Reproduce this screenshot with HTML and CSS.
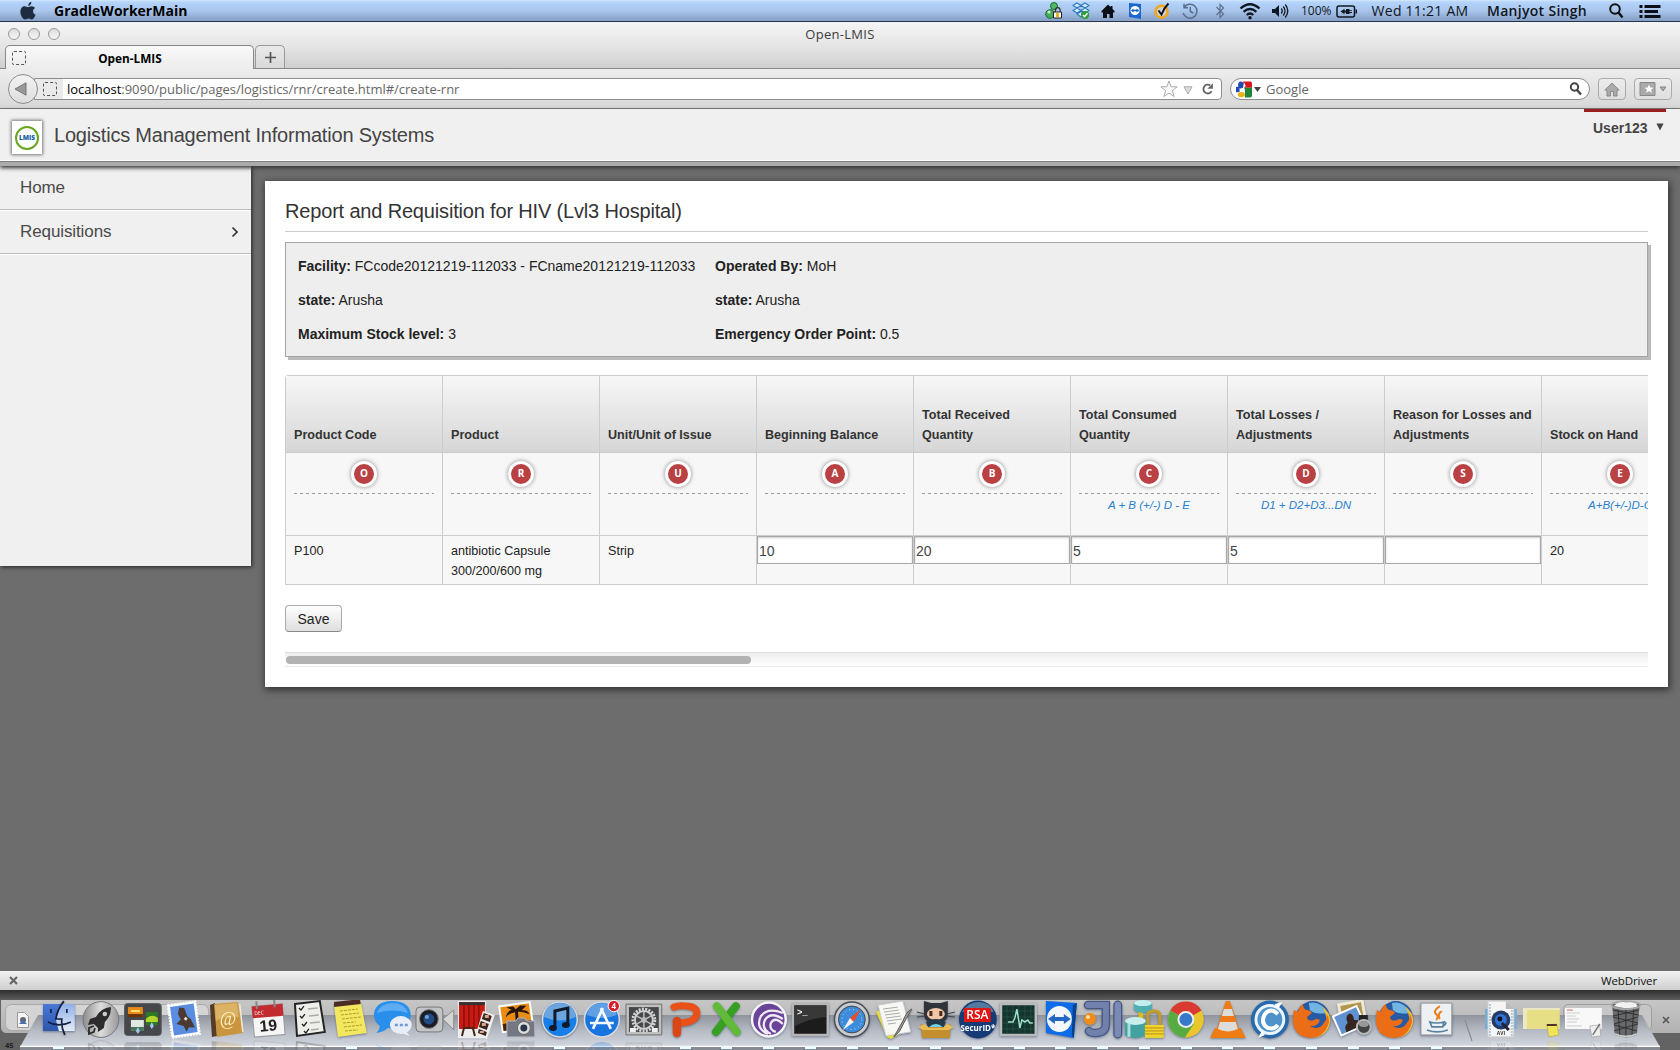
FILE: index.html
```html
<!DOCTYPE html>
<html lang="en">
<head>
<meta charset="utf-8">
<title>Open-LMIS</title>
<link rel="stylesheet" href="styles.css">
</head>
<body>
<div class="menubar">
  <svg class="apple" width="18" height="20" viewBox="0 0 18 20"><path d="M9.3 5.2C9 3 10.500 1.200 12.300.7c.3 2-1.200 4-3 4.500zM9 6.200c1-.1 2-1 3.600-1 1.500 0 2.700.7 3.400 1.800-2.800 1.700-2.500 5.500.6 6.800-.7 2-2.100 4.600-3.800 4.600-1.300 0-1.800-.8-3.300-.8s-2 .8-3.300.8C3.800 18.400 1.400 14.200 1.400 11c0-3.700 2.100-5.700 4.300-5.700 1.400 0 2.500.9 3.300.9z" fill="#1f2b41"/></svg>
  <b class="appname">GradleWorkerMain</b>
  <div class="status">
    <svg viewBox="0 0 18 18"><circle cx="9" cy="4" r="3.500" fill="#52b868" stroke="#176b2d"/><circle cx="5" cy="12" r="4.300" fill="#48ae5e" stroke="#176b2d"/><circle cx="4" cy="10" r="1.500" fill="#c9f2cf"/><path d="M10.500 10V8a2.300 2.300 0 0 1 4.600 0v2" fill="none" stroke="#333" stroke-width="1.200"/><path d="M8.500 10h8v6h-8z" fill="#fff" stroke="#222"/><path d="M11 11h3v4h-3z" fill="#e6b426"/></svg>
    <svg viewBox="0 0 18 18"><path d="m5 1 4 2.500L5 6 1 3.500zm8 0 4 2.500L13 6 9 3.500zM5 6l4 2.500L5 11 1 8.500zm8 0 4 2.500L13 11 9 8.500zM9 9.500l4 2.500-4 3-4-3z" fill="#d3eaff" stroke="#2f79bd" stroke-width="1.100"/><circle cx="13" cy="13" r="4" fill="#2e9c3b"/><path d="m11 13 1.500 1.700 3-3.500" fill="none" stroke="#fff" stroke-width="1.400"/></svg>
    <svg viewBox="0 0 18 18"><path d="M9 2.500 2.500 9v1.500H4V16h4v-4h2.500v4h3.500v-5.500h1.500V9l-2-2V4h-2v1.100z" fill="#0c0f16"/></svg>
    <svg viewBox="0 0 18 18"><path d="m3 1 12 1v15L3 15z" fill="#1b67cd"/><circle cx="9" cy="8.500" r="4.600" fill="#fff"/><path d="m4.800 8.500 2.700-2v1.300h3V6.500l2.700 2-2.700 2V9.200h-3v1.300z" fill="#1762c3"/></svg>
    <svg viewBox="0 0 18 18"><circle cx="8.500" cy="9.700" r="6" fill="#cbd5de" stroke="#f3a51b" stroke-width="2.600"/><path d="m5.500 8.500 3 4Q11 6 15.500 1.500" fill="none" stroke="#151515" stroke-width="2"/></svg>
    <svg viewBox="0 0 18 18"><path d="M3 5.500A7 7 0 1 1 2.200 11M3 1.800v4h4M9.300 5v4.500l3 1.500" fill="none" stroke="#5a6d8d" stroke-width="1.500"/></svg>
    <svg viewBox="0 0 18 18"><path d="m5.500 5 7 7-3.500 3.500v-13L12.500 6l-7 7" fill="none" stroke="#5e708f" stroke-width="1.200"/></svg>
    <svg class="big" viewBox="0 0 22 18"><path d="M1.500 6.500q9.500-8.500 19 0M4.600 9.800q6.400-5.600 12.800 0M7.700 13q3.300-3 6.600 0" fill="none" stroke="#111722" stroke-width="2.300"/><circle cx="11" cy="15.700" r="1.700" fill="#111722"/></svg>
    <svg viewBox="0 0 18 18"><path d="M1 7h3l4-4v12l-4-4H1z" fill="#111722"/><path d="M10.300 6.500q1.800 2.500 0 5m2-7q3.500 4.500 0 9m2-11q5 6.500 0 13" fill="none" stroke="#111722" stroke-width="1.300"/></svg>
    <span class="pct">100%</span>
    <svg class="big" viewBox="0 0 22 18"><rect x="1" y="4" width="17.500" height="11" rx="2" fill="none" stroke="#111722" stroke-width="1.500"/><path d="M19.500 7.500H21v4h-1.500zM4.500 9.500l4-2.700v1.700H10V7h3.500v1.200H16v.9h-2.500v.9H16v.9h-2.500V12H10v-1.500H8.500v1.700z" fill="#111722"/></svg>
    <span class="clock">Wed 11:21 AM</span>
    <span class="who">Manjyot Singh</span>
    <svg viewBox="0 0 18 18"><circle cx="8" cy="7" r="4.800" fill="none" stroke="#111" stroke-width="2"/><path d="m11.500 10.500 4 5" stroke="#111" stroke-width="2.400"/></svg>
    <svg class="big" viewBox="0 0 22 18"><path d="M.5 4.500h3m2 0h16M.5 9.500h3m2 0H19M.5 14.500h3m2 0h16" stroke="#0b0e14" stroke-width="3"/></svg>
  </div>
</div>

<div class="chrome">
  <div class="titlebar"><i></i><i></i><i></i><span>Open-LMIS</span></div>
  <div class="tabs">
    <div class="tab"><span class="blank"></span><b>Open-LMIS</b></div>
    <div class="newtab"><svg width="11" height="11" viewBox="0 0 11 11"><path d="M5.500 0v11M0 5.500h11" stroke="#555" stroke-width="1.700"/></svg></div>
  </div>
  <div class="toolbar">
    <div class="back"><svg width="14" height="14" viewBox="0 0 14 14"><path d="M1 7 12 .8v12.400z" fill="#999" stroke="#777"/></svg></div>
    <div class="url">
      <span class="blank"></span>
      <span class="address"><em>localhost</em>:9090/public/pages/logistics/rnr/create.html#/create-rnr</span>
      <svg width="18" height="18" viewBox="0 0 18 18"><path d="m9 1 2.100 5.700 6 .2-4.700 3.700 1.700 5.900L9 13.100l-5.100 3.400 1.700-5.900L.9 6.900l6-.2z" fill="#fafafa" stroke="#aaa"/></svg>
      <svg class="drop" width="10" height="9" viewBox="0 0 10 9"><path d="M1 .8h8L5 8z" fill="#ddd" stroke="#aaa"/></svg>
      <svg width="13" height="14" viewBox="0 0 14 14"><path d="M11.500 9.500A4.800 4.800 0 1 1 10 3" fill="none" stroke="#666" stroke-width="2"/><path d="M12.800.8v6H6.800z" fill="#666"/></svg>
    </div>
    <div class="search">
      <svg width="16" height="17" viewBox="0 0 18 18"><path d="M8 0h8a2 2 0 0 1 2 2v5H9z" fill="#d5191b"/><path d="M9 7h9v9a2 2 0 0 1-2 2H10V9z" fill="#218537"/><path d="M0 6h4v6H0z" fill="#1d4cb6"/><ellipse cx="5.500" cy="4" rx="3.200" ry="4" fill="#1d4cb6"/><path d="M6 7q5 2 2 5H4q4-2 2-5zM9 1l2 4-3 3z" fill="#fff"/><ellipse cx="6" cy="14.700" rx="4" ry="3" fill="#efb116"/></svg>
      <svg class="tiny" width="7" height="5" viewBox="0 0 7 5"><path d="M0 0h7L3.500 5z" fill="#444"/></svg>
      <span>Google</span>
      <svg width="14" height="14" viewBox="0 0 14 14"><circle cx="5.500" cy="5" r="3.700" fill="none" stroke="#444" stroke-width="2"/><path d="m8 8 4 4.500" stroke="#444" stroke-width="2.400"/></svg>
    </div>
    <div class="tbtn"><svg width="16" height="15" viewBox="0 0 16 15"><path d="M8 1 .8 8H3v6h3.500V9.500h3V14H13V8h2.200z" fill="#aaa" stroke="#888"/></svg></div>
    <div class="tbtn wide"><svg width="28" height="16" viewBox="0 0 28 16"><path d="M1 1.500h15v13H1z" fill="#aaa" stroke="#888"/><path d="m10 3.500 1.300 3 3.200.2-2.500 2 .9 3.300-2.900-1.900L7.100 12 8 8.700l-2.500-2 3.200-.2z" fill="#fff"/><path d="M21 6h6l-3 4z" fill="#aaa" stroke="#888"/></svg></div>
  </div>
</div>

<div class="apphead">
  <div class="logo"><span>LMIS</span></div>
  <div class="sysname">Logistics Management Information Systems</div>
  <div class="user">User123<svg width="8" height="8" viewBox="0 0 9 9"><path d="M.5.5h8l-4 8z" fill="#444"/></svg></div>
</div>

<div class="page">
  <nav class="side">
    <a>Home</a>
    <a>Requisitions<svg width="8" height="12" viewBox="0 0 8 12"><path d="m1.500 1.500 4.500 4.500-4.500 4.500" fill="none" stroke="#333" stroke-width="1.700"/></svg></a>
  </nav>
  <main class="card">
    <h1>Report and Requisition for HIV (Lvl3 Hospital)</h1>
    <div class="info">
      <p><b>Facility:</b> FCcode20121219-112033 - FCname20121219-112033</p><p><b>Operated By:</b> MoH</p>
      <p><b>state:</b> Arusha</p><p><b>state:</b> Arusha</p>
      <p><b>Maximum Stock level:</b> 3</p><p><b>Emergency Order Point:</b> 0.5</p>
    </div>
    <div class="scroller">
      <table>
        <tr class="heads"><th>Product Code</th><th>Product</th><th>Unit/Unit of Issue</th><th>Beginning Balance</th><th>Total Received Quantity</th><th>Total Consumed Quantity</th><th>Total Losses / Adjustments</th><th>Reason for Losses and Adjustments</th><th>Stock on Hand</th></tr>
        <tr class="codes">
          <td><div><s>O</s></div></td><td><div><s>R</s></div></td><td><div><s>U</s></div></td><td><div><s>A</s></div></td><td><div><s>B</s></div></td>
          <td><div><s>C</s></div><em>A + B (+/-) D - E</em></td><td><div><s>D</s></div><em>D1 + D2+D3...DN</em></td><td><div><s>S</s></div></td><td><div><s>E</s></div><em>A+B(+/-)D-C</em></td>
        </tr>
        <tr class="row"><td>P100</td><td>antibiotic Capsule 300/200/600 mg</td><td>Strip</td>
          <td class="edit"><input value="10"></td><td class="edit"><input value="20"></td><td class="edit"><input value="5"></td><td class="edit"><input value="5"></td><td class="edit"><input value=""></td><td>20</td></tr>
      </table>
    </div>
    <button class="save">Save</button>
    <div class="track"><div class="thumb"></div></div>
  </main>
</div>

<div class="addonbar"><svg width="9" height="9" viewBox="0 0 9 9"><path d="m1 1 7 7m0-7L1 8" stroke="#666" stroke-width="2.200"/></svg><span>WebDriver</span></div>

<div class="desk">
  <svg class="shelf" width="1680" height="60" viewBox="0 0 1680 60">
    <defs>
      <linearGradient id="sh" x1="0" y1="0" x2="0" y2="1"><stop offset="0" stop-color="#2e2e2e"/><stop offset="1" stop-color="#5d5d5d"/></linearGradient>
      <linearGradient id="gl" x1="0" y1="0" x2="0" y2="1"><stop offset="0" stop-color="#8f949d"/><stop offset=".5" stop-color="#b6bbc5"/><stop offset="1" stop-color="#d3d7df"/></linearGradient>
      <linearGradient id="wn" x1="0" y1="0" x2="0" y2="1"><stop offset="0" stop-color="#c6c6c6"/><stop offset="1" stop-color="#b2b2b2"/></linearGradient>
    </defs>
    <path d="M0 0h1680v60H0z" fill="#636363"/>
    <path d="M0 0h1680v10H0z" fill="url(#sh)"/>
    <path d="M1 10h1679v33H7q-6 0-6-6z" fill="url(#wn)"/>
    <rect x="5.500" y="14.500" width="203" height="26" rx="6" fill="#d4d4d4" stroke="#a9a9a9"/>
    <rect x="1563.500" y="14.500" width="88" height="26" rx="5" fill="#c6c6c6" stroke="#9d9d9d"/>
    <path d="M17.500 22.500h7l4 4v11h-11z" fill="#f4f4f4" stroke="#999"/><circle cx="23" cy="30" r="3" fill="#667"/><path d="m19 34 4-4 4 4z" fill="#4472ad"/>
    <path d="m1663 27 6 6m0-6-6 6" stroke="#555" stroke-width="1.600"/>
    <path d="M38 25h1604l18 32H20z" fill="url(#gl)"/>
    <path d="M20 56.500h1640" stroke="#fff" stroke-width="1.500"/><path d="M20 57.500h1640V60H20z" fill="#868b93"/>
    <path d="m1465 30 7 21" stroke="#878c95" stroke-width="1.200"/>
    <text x="5" y="56" dy="2" font-size="7.500" font-family="Open Sans, sans-serif" font-weight="700" fill="#222">45</text>
  </svg>
  <div class="dock">
    <svg class="on" viewBox="0 0 42 40"><defs><linearGradient id="f" x1="0" y1="0" x2="0" y2="1"><stop offset="0" stop-color="#4a78d8"/><stop offset="1" stop-color="#2d56ad"/></linearGradient><linearGradient id="f2" x1="0" y1="0" x2="0" y2="1"><stop offset="0" stop-color="#8fb0ea"/><stop offset="1" stop-color="#e3eaf6"/></linearGradient></defs><path d="M5 4h18v27H5z" fill="url(#f)"/><path d="M23 4h14v27H21l-3-11z" fill="url(#f2)"/><path d="M26 1q-7 9-8 18h6q-1 8 3 16M10 22q11 6 23 0M13 9v4m16-4v4" fill="none" stroke="#14213f" stroke-width="1.700"/></svg>
    <svg viewBox="0 0 42 40"><defs><linearGradient id="l"><stop offset="0" stop-color="#8b8b8b"/><stop offset=".5" stop-color="#ddd"/><stop offset="1" stop-color="#999"/></linearGradient></defs><circle cx="21" cy="19.500" r="18" fill="url(#l)" stroke="#777"/><path d="M31 7q-10 1-15 10l-6 2-2 6 6-1 4 4 0 4 6-4 1-6q7-7 6-15z" fill="#2c2c2e"/><circle cx="25" cy="14" r="2.300" fill="#ccc"/><path d="m14 26-5 2v6l5-2 1-4" fill="none" stroke="#2c2c2e" stroke-width="1.800"/></svg>
    <svg viewBox="0 0 42 40"><rect x="2.500" y="3.500" width="37" height="32" rx="3" fill="#45474b" stroke="#5c5e62"/><path d="M6 7h15v10H6z" fill="#e98a1c"/><path d="M6 14h15v3H6z" fill="#6d3206"/><path d="M9 10h9v2H9z" fill="#ffe071"/><path d="M24 12h12v13H24z" fill="#2c7a25"/><path d="M24 19q6-6 12-1v4H24z" fill="#b3d62b"/><path d="M9 20h13v11H9z" fill="#dfe8e2"/><path d="M9 27h13v4H9z" fill="#48765a"/><path d="m14 31 2-4 2 4-2 3zM28 26l2-4 2 4-2 3z" fill="#9cc7e8"/></svg>
    <svg viewBox="0 0 42 40"><g transform="rotate(-8 21 20)"><path d="M7 3h28v33H7z" fill="#fff" stroke="#fff" stroke-width="2" stroke-dasharray="2 1"/><path d="M9 5h24v29H9z" fill="#5a8de0"/><path d="m18 7 5 1 2 9 3 3 3 9-6-1-3 4-2-6-7-3 5-4-2-6z" fill="#4a3a31"/><path d="m21 19 2-2 2 2-2 2z" fill="#eadfce"/></g></svg>
    <svg viewBox="0 0 42 40"><path d="m5 5 5-2 2 33-5 1z" fill="#543c27"/><path d="m9 4 24-2 5 31-26 4z" fill="#c9963f"/><path d="m10 5 22-2 2 14q-12-2-23 4z" fill="#dcb265"/><path d="m35 4 3 28" stroke="#f4ead0" stroke-width="1.500"/><text x="23" y="25" text-anchor="middle" font-size="18" font-family="Liberation Serif" fill="#fff0c4">@</text></svg>
    <svg viewBox="0 0 42 40"><g transform="rotate(-5 21 20)"><path d="M6 5h31v31H6z" fill="#f5f5f5" stroke="#999"/><path d="M6 5h31v12H6z" fill="#c22b2f"/><text x="8" y="14" font-size="5" font-family="Open Sans" fill="#fff">DEC</text><text x="21" y="31" text-anchor="middle" font-size="16" font-weight="700" font-family="Liberation Sans" fill="#222">19</text><path d="M11 0v8m18-8v8" stroke="#888" stroke-width="2"/></g></svg>
    <svg viewBox="0 0 42 40"><path d="m6 4 25-3 5 31-28 4z" fill="#eeeeea" stroke="#232323" stroke-width="2"/><path d="m10 8 2 2 3-4m-4 10 2 2 3-4m-3 10 2 2 3-4m-3 9 2 2 3-4" fill="none" stroke="#222" stroke-width="1.300"/><path d="m19 9 10-1m-9 8 10-1m-9 8 10-1m-9 8 8-1" stroke="#aaa" stroke-width="1.500"/></svg>
    <svg class="on" viewBox="0 0 42 40"><path d="m4 5 27-3 6 31-29 4z" fill="#f3e760"/><path d="m4 2 26-3 1 5-27 3z" fill="#4c2c24"/><path d="m10 11 18-2m-17 6 18-2m-17 6 19-2m-18 6 13-1m-12 5 18-2m-17 6 13-1" stroke="#aa9c24" stroke-dasharray="3 1"/></svg>
    <svg viewBox="0 0 42 40"><path d="M20 1C7 1 2 8 2 15q0 7 6 11-1 5-4 7 8-1 12-5c15 2 23-5 23-13S33 1 20 1z" fill="#298fea"/><path d="M5 13Q8 4 20 3q13 0 16 10-15-5-31 0z" fill="#5dacf5"/><ellipse cx="29" cy="25" rx="11" ry="9" fill="#e8eef7"/><path d="m33 30 5 6-9-3z" fill="#e8eef7"/><path d="M23 25h3m2 0h3m2 0h3" stroke="#6f97d5" stroke-width="2.600"/></svg>
    <svg viewBox="0 0 42 40"><rect x="2" y="7" width="27" height="25" rx="4" fill="#c2c3c5" stroke="#777"/><path d="m29 19 11-9v20z" fill="#d5d5d6" stroke="#888"/><circle cx="15" cy="19" r="9.500" fill="#1a1d24" stroke="#888"/><circle cx="15" cy="19" r="5.500" fill="#214b85"/><circle cx="13" cy="17" r="2" fill="#72a3da"/></svg>
    <svg viewBox="0 0 42 40"><path d="M2 1h28v37H2z" fill="#eee"/><path d="M3 2h26v27H3z" fill="#c81b13"/><path d="M3 2h26v3H3z" fill="#333"/><path d="M8 5v23m5-23v23m5-23v23m5-23v23" stroke="#8f0f0a" stroke-width="1.500"/><path d="m8 28-2 8m11-8 2 8m-12-8h12" stroke="#4a2415" stroke-width="2"/><path d="m27 11 12 4-8 24-11-5z" fill="#eee"/><path d="m28 13 8 3-2 6-8-3zm-3 8 8 3-2 6-8-3zm-2 8 8 3-1 4-8-3z" fill="#3b241e"/><path d="M29 15h4v3h-4zm-3 8h4v3h-4zm-2 8h4v2h-4z" fill="#d8a58d"/></svg>
    <svg viewBox="0 0 42 40"><g transform="rotate(-8 20 18)"><path d="M3 3h33v28H3z" fill="#fff"/><path d="M5 5h29v24H5z" fill="#e88c14"/><path d="M5 22h29v7H5z" fill="#442306"/><path d="m18 27 1-15q-6 0-10 4 2-6 7-7l-5-3h7l2 3 5-3 6 1-5 4q6 0 7 5-6-4-11-4l-1 15z" fill="#27150c"/></g><path d="M10 21h9l2-3h7l2 3h8v16H10z" fill="#747884" stroke="#b4b7bf"/><circle cx="27" cy="28" r="6.500" fill="#ddd" stroke="#666"/><circle cx="27" cy="28" r="3.500" fill="#293447"/></svg>
    <svg class="on" viewBox="0 0 42 40"><circle cx="21" cy="19.500" r="17.500" fill="#187fe8" stroke="#d8dadd" stroke-width="1.500"/><path d="M5 17Q6 3 21 3t16 14q-16 7-32 0z" fill="#6ca4dd"/><path d="M16 28V11l13-3v17" fill="none" stroke="#101a2d" stroke-width="3"/><ellipse cx="14" cy="28" rx="4" ry="3" fill="#101a2d"/><ellipse cx="27" cy="25" rx="4" ry="3" fill="#101a2d"/></svg>
    <svg viewBox="0 0 42 40"><circle cx="21" cy="19.500" r="17.500" fill="#1875df" stroke="#d8dadd" stroke-width="1.500"/><path d="M6 15Q8 3 21 3t15 12q-15 6-30 0z" fill="#5f9fe2"/><path d="m12 29 10-21m-2 0 10 21M9 23h24" fill="none" stroke="#f3f8ff" stroke-width="2.700"/><circle cx="33" cy="6" r="5.700" fill="#d61f28" stroke="#fff"/><text x="33" y="9" text-anchor="middle" font-size="8" font-weight="700" font-family="Open Sans" fill="#fff">4</text></svg>
    <svg viewBox="0 0 42 40"><path d="M3 4h36v31H3z" fill="#c0c0c0" stroke="#707070"/><path d="M6 7h30v25H6z" fill="#45484a"/><circle cx="21" cy="20" r="11" fill="none" stroke="#d7d7d7" stroke-width="3" stroke-dasharray="2 1.300"/><circle cx="21" cy="20" r="9" fill="none" stroke="#ccc" stroke-width="2"/><circle cx="21" cy="20" r="3" fill="#aaa"/><path d="M21 12v16m-7-4 14-8m-14 0 14 8" stroke="#bbb" stroke-width="1.500"/><path d="M7 28h6v4H7zm22 0h6v4h-6z" fill="#eee"/></svg>
    <svg class="on" viewBox="0 0 42 40"><path d="M10 7q5-2 13-1 11 1 10 8-1 8-16 9" fill="none" stroke="#e95119" stroke-width="7" stroke-linecap="round"/><path d="M13 21v12" stroke="#d94716" stroke-width="8.500" stroke-linecap="round"/></svg>
    <svg class="on" viewBox="0 0 42 40"><path d="m30 6-20 26" stroke="#379f22" stroke-width="8" stroke-linecap="round"/><path d="m11 6 20 26" stroke="#61bb39" stroke-width="8" stroke-linecap="round"/></svg>
    <svg class="on" viewBox="0 0 42 40"><circle cx="21" cy="19.500" r="17" fill="#694498" stroke="#f4f4f6" stroke-width="2.500"/><path d="M35 13Q20 7 13 16q-6 12 7 18m15-15q-12-8-18 1-4 9 6 14m12-10q-8-8-12-1-2 7 5 9" fill="none" stroke="#f0eaf6" stroke-width="2.300"/></svg>
    <svg class="on" viewBox="0 0 42 40"><path d="M3 4h35v31H3z" fill="#1c1c1c" stroke="#b5b5b5" stroke-width="2.500"/><path d="M5 6h31v11q-15 1-31 9z" fill="#383838"/><text x="7" y="15" font-size="9" font-weight="700" font-family="Liberation Mono" fill="#fff">&gt;_</text></svg>
    <svg class="on" viewBox="0 0 42 40"><circle cx="21" cy="19.500" r="17.500" fill="#c9ccd0" stroke="#4c5055" stroke-width="1.500"/><circle cx="21" cy="19.500" r="13.500" fill="#3c8cdb" stroke="#444"/><circle cx="21" cy="19.500" r="10" fill="none" stroke="#c6e2ff" stroke-dasharray="1 3"/><path d="M30 9 23 22l-4-4z" fill="#e74d27"/><path d="m12 30 7-12 4 4z" fill="#f1f1f1"/></svg>
    <svg class="on" viewBox="0 0 42 40"><path d="m3 12 18-9 9 29-12 7-4-2z" fill="#e8dc35"/><path d="m5 5 25-4 8 31-25 4z" fill="#f7f7f4" stroke="#ccc"/><path d="m10 9 15-2m-14 5 15-2m-14 5 15-2m-14 5 15-2m-14 5 15-2m-14 5 8-1" stroke="#aaa"/><path d="M39 9q-5 2-9 12L21 37q7-5 10-14z" fill="#999" stroke="#5b5b5b"/></svg>
    <svg class="on" viewBox="0 0 42 40"><path d="m9 1 7 2h10l7-2v13q0 9-12 9T9 14z" fill="#30333a"/><path d="m2 12 8 2m-8 3 8-1m30-4-8 2m8 3-8-1" stroke="#444"/><ellipse cx="21" cy="14" rx="9" ry="6" fill="#f1c6a4"/><path d="M16 11v5m10-5v5" stroke="#472a20" stroke-width="3"/><path d="M11 22q10-6 20 0l-3 7H14z" fill="#24394a"/><path d="m6 24 7 3h16l7-3-1 14H7z" fill="#c38e2e"/><path d="m3 27 7-3 4 4h14l4-4 7 3-5 3H8z" fill="#e8bd56"/><path d="M14 27q7-6 14 0z" fill="#70d4ee"/></svg>
    <svg class="on" viewBox="0 0 42 40"><circle cx="21" cy="19.500" r="19" fill="#153b76"/><path d="M5 12Q12 1 23 2t14 10z" fill="#54799f"/><path d="M7 8h27v14H7z" fill="#df1612"/><text x="20.500" y="19.500" text-anchor="middle" font-size="12" font-weight="600" font-family="Open Sans" fill="#fff">RSA</text><text x="21" y="31" text-anchor="middle" font-size="8" font-weight="700" font-family="Open Sans" fill="#fff">SecurID*</text></svg>
    <svg class="on" viewBox="0 0 42 40"><path d="M3 4h35v31H3z" fill="#14342e" stroke="#b9babb" stroke-width="2.500"/><path d="M9 6v27m6-27v27m6-27v27m6-27v27m6-27v27M5 11h31M5 17h31M5 23h31M5 29h31" stroke="#2b544a" stroke-width=".7"/><path d="M10 22h5l2-4 2-9 3 19 2-8 3 2 3-2 2 3h3" fill="none" stroke="#9be1c7" stroke-width="1.500"/></svg>
    <svg class="on" viewBox="0 0 42 40"><path d="m6 1 31 2-3 35L6 33z" fill="#0f6be6"/><path d="m33 5 4-2-3 35-2-2z" fill="#064293"/><ellipse cx="19.500" cy="19" rx="12.500" ry="13" fill="#f3f6fa"/><path d="m8 19 7-5v3h9v-3l7 5-7 5v-3h-9v3z" fill="#2467c5"/></svg>
    <svg class="on" viewBox="0 0 42 40"><path d="M6 5h18v19q0 9-11 9-5 0-6-2" fill="none" stroke="#465783" stroke-width="8.500" stroke-linecap="round"/><path d="M6 5h18v19q0 9-11 9-5 0-6-2" fill="none" stroke="#7181ac" stroke-width="6" stroke-linecap="round"/><path d="M36 5v29" stroke="#465783" stroke-width="9" stroke-linecap="round"/><path d="M36 5v29" stroke="#7b8ab4" stroke-width="6.500" stroke-linecap="round"/><circle cx="8" cy="19" r="6" fill="#f18c1a"/><circle cx="6" cy="17" r="2" fill="#ffe0a3"/></svg>
    <svg class="on" viewBox="0 0 42 40"><path d="M17 12v10" stroke="#d8ba24" stroke-width="5"/><path d="M10 3v7q9 6 18 0V3z" fill="#4faeb0"/><ellipse cx="19" cy="3" rx="9" ry="3" fill="#c3eeee"/><path d="M1 21v14q10 6 21 0V21z" fill="#42a29f"/><path d="M5 24v13" stroke="#a9e0dd" stroke-width="3"/><ellipse cx="11.500" cy="21" rx="10.500" ry="4" fill="#caeeec"/><path d="M24 26V16q0-5 6-5t6 5v10" fill="none" stroke="#c69c24" stroke-width="3"/><path d="M21 25h19v13H21z" fill="#f2d52a"/><path d="M21 28h19M21 31h19M21 34h19" stroke="#ba901b"/></svg>
    <svg class="on" viewBox="0 0 42 40"><circle cx="21" cy="19.500" r="18" fill="#e9c62c"/><path d="M21 19.500 5.400 10.500A18 18 0 0 1 36.600 10.500z" fill="#d93a32"/><path d="M5.400 10.500A18 18 0 0 0 20 37.500l9-13.500-8-4.500z" fill="#56ab42"/><circle cx="21" cy="19.500" r="8.500" fill="#eee"/><circle cx="21" cy="19.500" r="6.500" fill="#3878c8"/></svg>
    <svg class="on" viewBox="0 0 42 40"><path d="M8 28h26l5 10H3z" fill="#ed7d11"/><path d="M19 1h4l10 31q-12 6-24 0z" fill="#ee7b17"/><path d="m17 9 8 0 2 7H15zM13 22h16l2 7q-10 5-20 0z" fill="#dcdcda"/></svg>
    <svg class="on" viewBox="0 0 42 40"><circle cx="21" cy="19.500" r="19" fill="#2769aa"/><circle cx="21" cy="19.500" r="14" fill="#4f91cb" stroke="#eaf4fd" stroke-width="3"/><path d="M29 14q-7-7-13 0-5 9 3 14 6 2 10-3" fill="none" stroke="#fff" stroke-width="4"/><path d="m26 4 8-2-5 7zM16 35l-7 3 4-7z" fill="#fff"/></svg>
    <svg class="on" viewBox="0 0 42 40"><circle cx="22" cy="18" r="17" fill="#285aa4"/><path d="M18 3q12-3 18 10-12 2-17-3z" fill="#72b5e2"/><path d="M31 6q13 10 6 23-5 8-14 9 13-4 13-17-1-9-5-15z" fill="#f4bf2d"/><path d="M3 10q0 0 4 2 1-6 5-8 0 4 3 6 5 0 6 3l-5 4q1 5 7 3 3-2 6 0-2 7-10 6 9 5 14-3 3-3 3-9 4 6 1 12-5 12-17 12Q2 37 2 20q0-6 1-10z" fill="#eb6d16"/></svg>
    <svg class="on" viewBox="0 0 42 40"><g transform="rotate(-10 20 20)"><path d="M8 1h27v25H8z" fill="#eee8d5"/><path d="M11 4h21v18H11z" fill="#af9651"/></g><g transform="rotate(-24 20 20)"><path d="M3 8h28v23H3z" fill="#fff"/><path d="M5 10h24v19H5z" fill="#6091d0"/><path d="M10 29q0-7 5-8 0-8 5-8 4 1 2 8 5 1 5 8z" fill="#37261f"/></g><path d="M27 15h9v6h-9z" fill="#222"/><circle cx="32" cy="27" r="7" fill="#444" stroke="#bbb" stroke-width="2"/><ellipse cx="32" cy="24" rx="5" ry="3" fill="#999"/></svg>
    <svg class="on" viewBox="0 0 42 40"><circle cx="22" cy="18" r="17" fill="#285aa4"/><path d="M18 3q12-3 18 10-12 2-17-3z" fill="#72b5e2"/><path d="M31 6q13 10 6 23-5 8-14 9 13-4 13-17-1-9-5-15z" fill="#f4bf2d"/><path d="M3 10q0 0 4 2 1-6 5-8 0 4 3 6 5 0 6 3l-5 4q1 5 7 3 3-2 6 0-2 7-10 6 9 5 14-3 3-3 3-9 4 6 1 12-5 12-17 12Q2 37 2 20q0-6 1-10z" fill="#eb6d16"/></svg>
    <svg class="on" viewBox="0 0 42 40"><path d="M5 3h31v32H5z" fill="#eef1f4" stroke="#999"/><path d="M24 6q-8 5-3 9 2 3-1 5m6-9q-5 3-2 8" fill="none" stroke="#e98120" stroke-width="2"/><path d="M14 22q7 2 14 0l-1 5H16zm14 0q4 0 0 4M11 30q10 4 21 0" fill="none" stroke="#57829e" stroke-width="1.700"/></svg>
    <i class="gap"></i>
    <svg viewBox="0 0 42 40"><path d="M5 9h32v20H5z" fill="#78acd5"/><path d="M8 1h18l8 8v28H8z" fill="#f5f5f5" stroke="#ccc"/><path d="M26 1v8h8z" fill="#bbb"/><path d="M10 4v32M32 10v26" stroke="#b7c9d8" stroke-width="2" stroke-dasharray="2 1"/><circle cx="21" cy="20" r="9.500" fill="#253b67"/><circle cx="21" cy="20" r="6" fill="#2f73d7"/><circle cx="20" cy="19" r="2.500" fill="#111"/><path d="m22 23 7 7" stroke="#223" stroke-width="3"/><text x="21" y="35.500" text-anchor="middle" font-size="5" font-weight="700" font-family="Open Sans" fill="#333">AVI</text></svg>
    <svg viewBox="0 0 42 40"><path d="M2 8h37v21H2z" fill="#e7df85"/><path d="M2 8h4v21H2zM2 8h37v2H2z" fill="#ece8c3"/><path d="m26 25 10-1 2 11-10 2z" fill="#efe35a" stroke="#b1a842" stroke-width=".6"/><path d="M26 24h10v2H26z" fill="#4c3028"/></svg>
    <svg viewBox="0 0 42 40"><path d="M2 8h37v21H2z" fill="#f8f8f8"/><path d="M4 10h6" stroke="#ca6961"/><path d="M4 13h13M4 16h9m-9 3h12M4 22h10M4 26h15" stroke="#ccc"/><path d="m27 26 10-1 1 11-9 1z" fill="#eee" stroke="#999" stroke-width=".6"/><path d="m37 24-7 11" stroke="#777" stroke-width="1.500"/></svg>
    <svg viewBox="0 0 42 40"><path d="M7 4h28l-3 31q-11 5-22 0z" fill="#68696c"/><path d="m8 10 26 5M8 17l25 6M9 25l23 6M34 10 8 16m25 1L9 24m24 0L9 31M13 8l2 28m6-28v29m8-29-2 28" stroke="#2c2c2c" stroke-width=".9"/><path d="M9 6q7-7 12-3 8-3 12 3-6 5-24 0z" fill="#f1f1f1"/><ellipse cx="21" cy="5" rx="14.500" ry="4" fill="none" stroke="#a5a7aa" stroke-width="1.800"/><path d="M10 34q11 5 22 0" fill="none" stroke="#ccc" stroke-width="1.600"/></svg>
  </div>
</div>
</body>
</html>
```
FILE: styles.css
```css
* { box-sizing: border-box; }
body { margin: 0; width: 1680px; height: 1050px; overflow: hidden; display: flex; flex-direction: column; font-family: "Liberation Sans", Arial, sans-serif; background: #6d6d6d; color: #222; }
svg { display: block; flex: none; }

.menubar { height: 22px; flex: none; display: flex; align-items: center; padding-left: 19px; background: linear-gradient(#d3e8fc 0, #b4d4fb 2px, #a9c6ec 50%, #88a2c8 95%); border-bottom: 1px solid #27334c; font-family: "Open Sans", sans-serif; font-size: 14px; color: #11151d; }
.appname { margin-left: 17px; width: 133px; white-space: nowrap; color: #000; }
.status { margin-left: auto; margin-right: 19px; display: grid; grid-template-columns: repeat(5, 27px) repeat(4, 30px) 7px 34px 22px 13px 98px 17px 102px 19px 18px 14px 22px; align-items: center; justify-items: center; height: 21px; white-space: nowrap; }
.status svg { width: 18px; height: 18px; }
.status svg.big { width: 22px; }
.status .pct { grid-column: 11; font-size: 12px; justify-self: start; margin-left: -1px; }
.status .pct + svg { grid-column: 12; }
.status .clock { grid-column: 14; font-weight: 500; letter-spacing: .25px; }
.status .who { grid-column: 16; font-weight: 600; letter-spacing: .3px; }
.status .who + svg { grid-column: 18; }
.status .who + svg + svg { grid-column: 20; }

.chrome { flex: none; height: 87px; font-family: "Open Sans", sans-serif; background: linear-gradient(#f5f5f5, #e2e2e2 28px, #cfcfcf 46px); border-bottom: 1px solid #7c7c7c; }
.titlebar { height: 23px; display: flex; align-items: center; gap: 8px; padding-left: 8px; font-size: 13px; letter-spacing: .3px; color: #3c3c3c; }
.titlebar i { width: 12px; height: 12px; border-radius: 50%; border: 1px solid #9a9a9a; background: linear-gradient(#dcdcdc, #f8f8f8); }
.titlebar span { margin: 0 68px 0 0; flex: 1; text-align: center; }
.tabs { height: 24px; display: flex; align-items: flex-end; padding-left: 5px; gap: 1px; border-bottom: 1px solid #888; }
.tab { width: 249px; height: 24px; margin-bottom: -1px; display: flex; align-items: center; padding: 0 6px; border: 1px solid #888; border-bottom: 0; border-radius: 5px 5px 0 0; background: linear-gradient(#f9f9f9, #ececec); font-size: 12px; }
.tab b { flex: 1; text-align: center; padding-right: 13px; color: #000; font-size: 11.8px; }
.blank { width: 14px; height: 14px; border: 1px dashed #555; border-radius: 2px; flex: none; }
.newtab { width: 30px; height: 23px; display: grid; place-items: center; border: 1px solid #999; border-bottom: 0; border-radius: 5px 5px 0 0; background: linear-gradient(#e9e9e9, #d9d9d9); }
.toolbar { height: 39px; display: flex; align-items: center; padding: 1px 8px 0; background: linear-gradient(#ededed, #d8d8d8); }
.back { width: 30px; height: 30px; border: 1px solid #8b8b8b; border-radius: 50%; background: linear-gradient(#f3f3f3, #ddd); display: grid; place-items: center; padding-right: 4px; z-index: 1; flex: none; }
.url { width: 1188px; height: 22px; margin-left: -4px; display: flex; align-items: center; padding: 0 7px 0 8px; border: 1px solid #8d8d8d; border-radius: 0 4px 4px 0; background: linear-gradient(90deg, #eaeaea 28px, #fff 28px); font-size: 13px; }
.url .address { flex: 1; margin-left: 10px; color: #666; white-space: nowrap; letter-spacing: -.02px; }
.url em { font-style: normal; color: #000; }
.url .drop { margin: 2px 8px 0 5px; }
.search { width: 360px; height: 22px; margin-left: 8px; display: flex; align-items: center; padding: 0 5px; border: 1px solid #8d8d8d; border-radius: 11px; background: #fff; font-size: 13px; color: #666; }
.search .tiny { margin: 0 5px 0 2px; }
.search span { flex: 1; }
.search svg:last-child { margin-right: 1px; }
.tbtn { width: 28px; height: 22px; margin-left: 8px; border: 1px solid #aaa; border-radius: 4px; display: grid; place-items: center; background: linear-gradient(#ececec, #dfdfdf); }
.tbtn.wide { width: 38px; }

.apphead { flex: none; height: 57px; display: flex; padding: 0 14px 0 12px; background: #f0f0f0; border-bottom: 4px solid #ababab; box-shadow: inset 0 -1px #7e7e7e, inset 0 -2px #fff, 0 2px 4px #333; position: relative; }
.logo { width: 30px; height: 33px; margin-top: 12px; background: #fff; box-shadow: 0 0 3px 1px #777; display: grid; place-items: center; }
.logo span { width: 24px; height: 24px; border: 2px solid #69a51f; border-radius: 50%; font: 800 6.5px/20px "Open Sans", sans-serif; text-align: center; color: #1664a8; }
.sysname { margin: 14px 0 0 12px; font-size: 20px; line-height: 24px; color: #444; letter-spacing: -.2px; }
.user { margin-left: auto; width: 82px; border-top: 3px solid #9c1d1d; font-size: 14px; font-weight: 700; line-height: 16px; padding: 8px 0 0 9px; color: #444; display: flex; gap: 8px; height: 40px; }
.user svg { margin-top: 3px; }

.page { height: 805px; flex: none; display: flex; align-items: flex-start; gap: 14px; }
.side { width: 251px; height: 400px; background: #f0f0f0; box-shadow: 1px 1px 4px #222; font-size: 17px; letter-spacing: -.1px; color: #4a4a4a; }
.side a { height: 44px; display: flex; align-items: center; justify-content: space-between; padding: 1px 12px 0 20px; border-bottom: 1px solid #bbb; box-shadow: 0 1px #fff; }
.card { width: 1403px; height: 506px; margin-top: 15px; padding: 0 20px; background: #fff; box-shadow: 1px 2px 7px 1px #333; }
h1 { margin: 0 0 10px; height: 51px; padding-top: 17px; border-bottom: 1px solid #ccc; font-size: 20px; font-weight: 400; line-height: 26px; color: #333; letter-spacing: -.17px; }
.info { height: 115px; width: 1363px; border: 1px solid #a5a5a5; background: #eee; box-shadow: 3px 3px #bbb; padding: 6px 12px; display: grid; grid-template-columns: 417px 1fr; grid-auto-rows: 34px; font-size: 14px; line-height: 34px; }
.info p { margin: 0; white-space: nowrap; }
.scroller { margin-top: 18px; overflow: hidden; height: 210px; border-radius: 4px 0 0 0; }
table { table-layout: fixed; width: 1413px; border-spacing: 0; border-bottom: 1px solid #ccc; font-size: 12.6px; line-height: 20px; }
th, td { border: solid #ccc; border-width: 1px 0 0 1px; padding: 0 8px; }
.heads th { height: 77px; padding-bottom: 7px; text-align: left; vertical-align: bottom; color: #333; background: linear-gradient(#f7f7f7, #d6d6d6); }
.codes td { height: 83px; vertical-align: top; text-align: center; background: #f7f7f7; }
.codes div { height: 41px; padding-top: 8px; background: repeating-linear-gradient(90deg, #999 0 3px, transparent 3px 6px) bottom / 100% 1px no-repeat; }
.codes s { display: block; width: 26px; height: 26px; margin: 0 auto; border: 3px solid #fff; border-radius: 50%; background: #b94143; box-shadow: 0 0 4px #888; color: #fff; font: 700 10px/19px "Open Sans", sans-serif; text-decoration: none; }
.codes em { display: block; font-size: 11.5px; line-height: 22px; color: #2a7fcd; white-space: nowrap; }
.row td { height: 49px; vertical-align: top; padding-top: 5px; padding-bottom: 3px; background: #f7f7f7; color: #222; }
.row td.edit { padding: 0; }
input { display: block; width: 156px; height: 28px; padding: 2px 1px 0; border: 1px solid #a9a9a9; box-shadow: inset 0 1px 2px #ccc; font: 14px "Liberation Sans", Arial, sans-serif; color: #444; }
.save { display: block; width: 57px; height: 27px; margin-top: 20px; border: 1px solid #aaa; border-bottom-color: #888; border-radius: 4px; background: linear-gradient(#fff, #dedede); font: 14px "Liberation Sans", Arial, sans-serif; color: #222; padding: 0; }
.track { height: 15px; margin-top: 20px; padding: 3px 1px; border-top: 1px solid #ddd; border-bottom: 1px solid #eaeaea; background: linear-gradient(#eee, #fff); }
.thumb { width: 465px; height: 8px; border-radius: 4px; background: #b2b2b2; }

.addonbar { flex: none; height: 19px; display: flex; align-items: center; justify-content: space-between; padding: 0 23px 0 9px; background: linear-gradient(#f2f2f2, #cfcfcf); font: 500 11.5px "Open Sans", sans-serif; letter-spacing: -.1px; color: #111; }
.desk { flex: none; height: 60px; display: grid; overflow: hidden; }
.shelf, .dock { grid-area: 1 / 1; }
.dock { display: flex; padding: 10px 0 0 38px; }
.dock svg { width: 41.76px; height: 40px; -webkit-box-reflect: below -2px linear-gradient(transparent 55%, rgba(0, 0, 0, .35)); }
.dock .on { height: 50px; padding-bottom: 10px; -webkit-box-reflect: none; background: linear-gradient(#eaffff, #eaffff) 50% 47px / 11px 2px no-repeat; filter: drop-shadow(0 1px 1px rgba(40, 60, 90, .5)); }
.gap { width: 22px; }
```
